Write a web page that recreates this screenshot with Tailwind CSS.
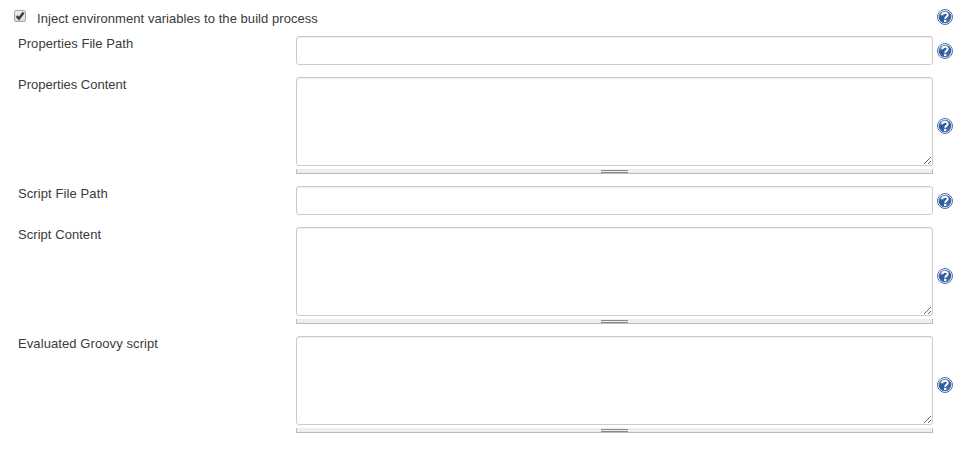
<!DOCTYPE html>
<html lang="en">
<head>
<meta charset="utf-8">
<title>Inject environment variables</title>
<script src="https://cdn.jsdelivr.net/npm/@tailwindcss/browser@4"></script>
</head>
<body class="bg-white text-[#3a3a3a] text-[13px] leading-4" style="font-family:'Liberation Sans',Arial,sans-serif">
<svg class="absolute size-0">
  <defs>
    <linearGradient id="blue" x1="0" y1="0" x2="0.6" y2="1"><stop offset="0" stop-color="#8aa8d0"/><stop offset=".5" stop-color="#2c5696"/><stop offset="1" stop-color="#4672b0"/></linearGradient>
    <linearGradient id="box" x1="0" y1="0" x2="0" y2="1"><stop offset="0" stop-color="#ededed"/><stop offset="1" stop-color="#dcdcdc"/></linearGradient>
    <symbol id="help" viewBox="0 0 16 16">
      <circle cx="8" cy="8" r="7.5" fill="#fff" stroke="#4a70a8"/>
      <circle cx="8" cy="8" r="6.3" fill="url(#blue)"/>
      <path d="M5.2 6.3C5.2 2.9 10.7 2.9 10.7 5.9C10.7 7.7 8.2 7.6 8.2 9.8" fill="none" stroke="#fff" stroke-width="2"/>
      <rect x="7.1" y="10.8" width="2.2" height="2.2" fill="#fff"/>
    </symbol>
    <symbol id="resize" viewBox="0 0 7 7"><path d="M0 6h1v1H0zM1 5h1v1H1zM2 4h1v1H2zM3 3h1v1H3zM4 2h1v1H4zM5 1h1v1H5zM6 0h1v1H6zM4 6h1v1H4zM5 5h1v1H5zM6 4h1v1H6z" fill="#666"/></symbol>
    <symbol id="check" viewBox="0 0 12 12">
      <rect x=".5" y=".5" width="11" height="11" rx="1.5" fill="url(#box)" stroke="#a5a5a5"/>
      <path d="M2.6 6.2L5 8.6L9.6 2.6" fill="none" stroke="#3c3c3c" stroke-width="2.4"/>
    </symbol>
  </defs>
</svg>
<main class="w-[953px] pl-[18px]">
  <div class="flex h-9 pt-[9px]">
    <svg class="-ml-1 mt-px size-3"><use href="#check"/></svg>
    <label class="ml-[11px] mt-[2px] whitespace-nowrap tracking-[0.055px]">Inject environment variables to the build process</label>
    <svg class="ml-auto size-4"><use href="#help"/></svg>
  </div>
  <div class="flex flex-col gap-3">
    <div class="flex">
      <label class="w-[278px] tracking-[0.05px]">Properties File Path</label>
      <div class="h-[29px] w-[637px] rounded-[3px] border border-[#ccc] shadow-[inset_0_1px_1px_rgba(0,0,0,0.075)]"></div>
      <svg class="ml-1 mt-[7px] size-4"><use href="#help"/></svg>
    </div>
    <div class="flex">
      <label class="w-[278px]">Properties Content</label>
      <div class="flex w-[637px] flex-col gap-[3px]">
        <div class="flex h-[89px] items-end justify-end rounded-[3px] border border-[#ccc] p-px shadow-[inset_0_1px_1px_rgba(0,0,0,0.075)]"><svg class="size-[7px]"><use href="#resize"/></svg></div>
        <div class="flex h-[5px] justify-center border border-t-0 border-[#bbb] bg-[#eee] pt-px"><div class="h-[3px] w-[27px] border-y border-[#888880]"></div></div>
      </div>
      <svg class="ml-1 mt-[41px] size-4"><use href="#help"/></svg>
    </div>
    <div class="flex">
      <label class="w-[278px] tracking-[0.1px]">Script File Path</label>
      <div class="h-[29px] w-[637px] rounded-[3px] border border-[#ccc] shadow-[inset_0_1px_1px_rgba(0,0,0,0.075)]"></div>
      <svg class="ml-1 mt-[7px] size-4"><use href="#help"/></svg>
    </div>
    <div class="flex">
      <label class="w-[278px] tracking-[0.05px]">Script Content</label>
      <div class="flex w-[637px] flex-col gap-[3px]">
        <div class="flex h-[89px] items-end justify-end rounded-[3px] border border-[#ccc] p-px shadow-[inset_0_1px_1px_rgba(0,0,0,0.075)]"><svg class="size-[7px]"><use href="#resize"/></svg></div>
        <div class="flex h-[5px] justify-center border border-t-0 border-[#bbb] bg-[#eee] pt-px"><div class="h-[3px] w-[27px] border-y border-[#888880]"></div></div>
      </div>
      <svg class="ml-1 mt-[41px] size-4"><use href="#help"/></svg>
    </div>
    <div class="flex">
      <label class="w-[278px] tracking-[0.09px]">Evaluated Groovy script</label>
      <div class="flex w-[637px] flex-col gap-[3px]">
        <div class="flex h-[89px] items-end justify-end rounded-[3px] border border-[#ccc] p-px shadow-[inset_0_1px_1px_rgba(0,0,0,0.075)]"><svg class="size-[7px]"><use href="#resize"/></svg></div>
        <div class="flex h-[5px] justify-center border border-t-0 border-[#bbb] bg-[#eee] pt-px"><div class="h-[3px] w-[27px] border-y border-[#888880]"></div></div>
      </div>
      <svg class="ml-1 mt-[41px] size-4"><use href="#help"/></svg>
    </div>
  </div>
</main>
</body>
</html>
